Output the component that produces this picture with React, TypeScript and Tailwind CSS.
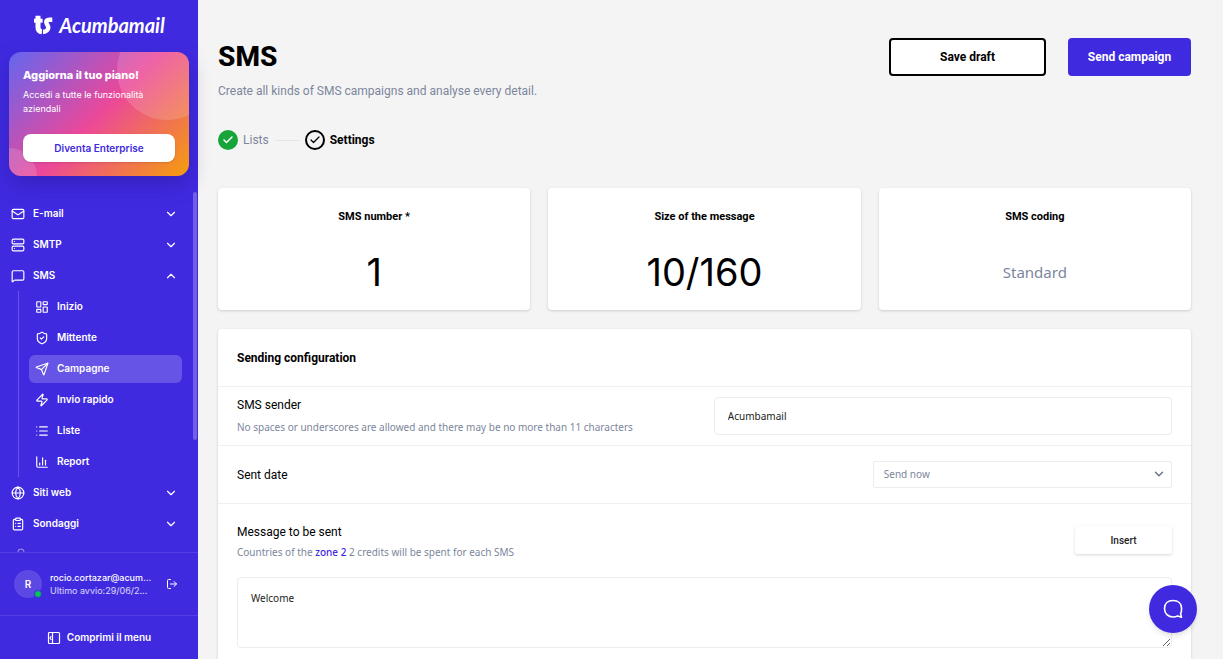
import React from 'react';
import {
    ChartColumn,
    Check,
    ChevronDown,
    ChevronUp,
    ClipboardList,
    Globe,
    LayoutDashboard,
    List,
    Lock,
    LogOut,
    LucideIcon,
    Mail,
    MessageSquare,
    Send,
    Server,
    ShieldCheck,
    Zap,
} from 'lucide-react';

interface NavEntry {
    label: string;
    icon: LucideIcon;
    active?: boolean;
}

const topItems: NavEntry[] = [
    { label: 'E-mail', icon: Mail },
    { label: 'SMTP', icon: Server },
];

const smsItems: NavEntry[] = [
    { label: 'Inizio', icon: LayoutDashboard },
    { label: 'Mittente', icon: ShieldCheck },
    { label: 'Campagne', icon: Send, active: true },
    { label: 'Invio rapido', icon: Zap },
    { label: 'Liste', icon: List },
    { label: 'Report', icon: ChartColumn },
];

const bottomItems: NavEntry[] = [
    { label: 'Siti web', icon: Globe },
    { label: 'Sondaggi', icon: ClipboardList },
];

const Logo: React.FC = () => (
    <a href="#" className="flex h-[50px] items-center justify-center gap-1.5 text-white">
        <svg width="20" height="20" viewBox="0 0 20 20" fill="none" stroke="currentColor" aria-hidden="true">
            <path d="M5 .8v11.400c0 2.800 1.200 4.300 3.900 4.500" strokeWidth="5" />
            <path d="M1 5.700h8.600" strokeWidth="4" />
            <path d="M19.300 4.800h-3c-2.500 0-3.600 1.200-2.900 3l1.500 3.400c1.100 2.700-.8 5.500-4.900 5.800" strokeWidth="4.400" />
        </svg>
        <span className="font-[Lato,sans-serif] text-xl leading-6 font-bold italic">Acumbamail</span>
    </a>
);

const UpgradeCard: React.FC = () => (
    <section className="relative mx-[9px] mt-0.5 overflow-hidden rounded-xl bg-[linear-gradient(135deg,#6366f1_0%,#ec4899_50%,#f59e0b_100%)] p-3.5 text-white shadow-[0_8px_20px_rgba(30,20,120,0.35)]">
        <div className="absolute -top-8 -right-7 size-[100px] rounded-full bg-white/15" />
        <div className="absolute -bottom-7 -left-7 size-[56px] rounded-full bg-white/15" />
        <div className="relative">
            <h2 className="text-[11px] leading-[18px] font-extrabold">Aggiorna il tuo piano!</h2>
            <p className="mt-1 text-[9px] leading-3.5">Accedi a tutte le funzionalità aziendali</p>
            <button className="mt-[18px] h-7 w-full rounded-lg bg-white text-[10px] font-semibold text-[#402ae0] shadow">
                Diventa Enterprise
            </button>
        </div>
    </section>
);

const NavGroup: React.FC<{ entry: NavEntry; open?: boolean }> = ({ entry, open }) => {
    const Icon = entry.icon;
    const Chevron = open ? ChevronUp : ChevronDown;
    return (
        <button className="flex h-[31px] w-full items-center gap-2 pr-5 pl-[11px] text-left text-[10px] font-semibold">
            <Icon size={14} strokeWidth={2} />
            <span className="flex-1">{entry.label}</span>
            <Chevron size={14} strokeWidth={2} />
        </button>
    );
};

const Sidebar: React.FC = () => (
    <aside className="flex w-[198px] shrink-0 flex-col bg-[#402ae0] font-[Inter,sans-serif] text-white">
        <Logo />
        <UpgradeCard />
        <div className="relative mt-4 min-h-0 flex-1 overflow-hidden">
            <nav className="pt-1.5">
                {topItems.map((item) => (
                    <NavGroup key={item.label} entry={item} />
                ))}
                <NavGroup entry={{ label: 'SMS', icon: MessageSquare }} open />
                <ul className="ml-[18px] border-l border-white/20 pr-4 pl-2.5">
                    {smsItems.map(({ label, icon: Icon, active }) => (
                        <li key={label} className="flex h-[31px] items-center">
                            <a
                                href="#"
                                className={`flex h-7 w-full items-center gap-2 rounded-md px-1.5 text-[10px] font-semibold ${active ? 'bg-white/20' : ''}`}
                            >
                                <Icon size={14} strokeWidth={2} />
                                {label}
                            </a>
                        </li>
                    ))}
                </ul>
                {bottomItems.map((item) => (
                    <NavGroup key={item.label} entry={item} />
                ))}
                <button aria-label="Altro" className="flex h-[31px] w-full items-center px-3.5 opacity-40">
                    <Lock size={14} />
                </button>
            </nav>
            {/* Scrollbar thumb */}
            <div className="absolute top-0 right-px h-[248px] w-1 rounded-full bg-white/25" />
        </div>
        <div className="flex h-[63px] items-center border-t border-white/10 pr-5 pl-3.5">
            <div className="relative flex size-7 shrink-0 items-center justify-center rounded-full bg-white/15 text-[10px] font-semibold">
                R
                <span className="absolute right-0 bottom-0 size-2 rounded-full border border-[#402ae0] bg-green-500" />
            </div>
            <div className="ml-2 min-w-0 flex-1 text-[9px] leading-[13px]">
                <div className="font-medium">rocio.cortazar@acum...</div>
                <div className="text-white/80">Ultimo avvio:29/06/2...</div>
            </div>
            <button aria-label="Esci">
                <LogOut size={12} />
            </button>
        </div>
        <button className="flex h-11 items-center justify-center gap-1.5 border-t border-white/10 text-[10px] font-semibold">
            <svg width="14" height="14" viewBox="0 0 14 14" fill="none" stroke="currentColor" strokeWidth="1.2" strokeLinecap="round" strokeLinejoin="round" aria-hidden="true">
                <rect x="1.500" y="1.500" width="11" height="11" rx="1" />
                <path d="M5.500 1.500v11M4 5.500 2.900 7 4 8.500" />
            </svg>
            Comprimi il menu
        </button>
    </aside>
);

const Steps: React.FC = () => (
    <ol className="mt-[29px] flex h-5 items-center text-xs">
        <li className="flex items-center gap-[5px] text-[#7c869c]">
            <span className="flex size-5 items-center justify-center rounded-full bg-[#17a53a] text-white">
                <Check size={12} strokeWidth={3} />
            </span>
            Lists
        </li>
        <li className="mx-1.5 h-px w-6 bg-[#e6e6e9]" aria-hidden="true" />
        <li className="flex items-center gap-[5px] font-bold">
            <span className="flex size-5 items-center justify-center rounded-full border-2 border-black">
                <Check size={12} strokeWidth={2.5} />
            </span>
            Settings
        </li>
    </ol>
);

const StatCard: React.FC<{ title: string; children: React.ReactNode }> = ({ title, children }) => (
    <div className="flex h-[122px] flex-col items-center rounded bg-white pt-[19px] shadow-[0_1px_3px_rgba(0,0,0,0.16)]">
        <h2 className="text-[11px] leading-5 font-bold">{title}</h2>
        <div className="mt-[21px] flex h-12 items-center">{children}</div>
    </div>
);

const SendingConfiguration: React.FC = () => (
    <section className="mt-[19px] rounded bg-white pb-10 shadow-[0_1px_3px_rgba(0,0,0,0.16)]">
        <h2 className="flex h-[57px] items-center px-[19px] text-xs font-bold">Sending configuration</h2>
        <div className="flex h-[59px] items-center justify-between border-t border-[#f0f0f2] px-[19px]">
            <div>
                <label htmlFor="sender" className="block text-xs leading-5">SMS sender</label>
                <p className="mt-0.5 font-['Noto_Sans',sans-serif] text-[10px] leading-5 text-[#7c869c]">
                    No spaces or underscores are allowed and there may be no more than 11 characters
                </p>
            </div>
            <input
                id="sender"
                defaultValue="Acumbamail"
                className="h-[38px] w-[49%] rounded border border-[#ececef] px-[13px] font-['Noto_Sans',sans-serif] text-[10px] text-[#222] outline-none"
            />
        </div>
        <div className="flex h-[58px] items-center justify-between border-t border-[#f0f0f2] px-[19px]">
            <label htmlFor="date" className="text-xs">Sent date</label>
            <div className="relative w-[32%]">
                <select
                    id="date"
                    className="block h-[27px] w-full appearance-none rounded-xs border border-[#ececef] bg-white px-2.5 font-['Noto_Sans',sans-serif] text-[10px] text-[#7c869c] outline-none"
                >
                    <option>Send now</option>
                </select>
                <ChevronDown size={14} strokeWidth={2.5} className="pointer-events-none absolute top-1.5 right-1.5 text-[#6b7688]" />
            </div>
        </div>
        <div className="border-t border-[#f0f0f2] px-[19px] pt-[18px]">
            <div className="flex items-center justify-between">
                <div>
                    <label htmlFor="message" className="block text-xs leading-5">Message to be sent</label>
                    <p className="font-['Noto_Sans',sans-serif] text-[10px] leading-5 text-[#7c869c]">
                        Countries of the <a href="#" className="font-medium text-[#402ae0]">zone 2</a> 2 credits will be spent for each SMS
                    </p>
                </div>
                <button className="mb-1 h-7 w-[97px] rounded-xs text-[10px] font-medium text-[#222] shadow-[0_1px_3px_rgba(0,0,0,0.16)]">
                    Insert
                </button>
            </div>
            <textarea
                id="message"
                defaultValue="Welcome"
                className="mt-[15px] block h-[71px] w-full rounded border border-[#ececef] px-[13px] py-2.5 font-['Noto_Sans',sans-serif] text-[10px] leading-5 text-[#222] outline-none"
            />
        </div>
    </section>
);

export default function App() {
    return (
        <div className="flex h-screen overflow-hidden bg-[#f4f4f4] text-black">
            <Sidebar />
            <main className="min-w-0 flex-1 overflow-hidden pt-[38px] pr-8 pl-5 font-[Roboto,sans-serif]">
                <header className="flex items-start justify-between">
                    <div>
                        <h1 className="text-[28px] leading-[38px] font-extrabold">SMS</h1>
                        <p className="mt-[5px] text-xs leading-5 text-[#7c869c]">
                            Create all kinds of SMS campaigns and analyse every detail.
                        </p>
                    </div>
                    <div className="flex gap-[22px] text-xs font-bold">
                        <button className="h-[38px] w-[157px] rounded border-2 border-black bg-white">Save draft</button>
                        <button className="h-[38px] w-[123px] rounded bg-[#402ae0] text-white">Send campaign</button>
                    </div>
                </header>
                <Steps />
                <div className="mt-[38px] grid grid-cols-3 gap-[18px]">
                    <StatCard title="SMS number *">
                        <span className="font-[Inter,sans-serif] text-[38px]">1</span>
                    </StatCard>
                    <StatCard title="Size of the message">
                        <span className="font-[Inter,sans-serif] text-[38px]">10/160</span>
                    </StatCard>
                    <StatCard title="SMS coding">
                        <span className="font-['Noto_Sans',sans-serif] text-[15px] text-[#7c869c]">Standard</span>
                    </StatCard>
                </div>
                <SendingConfiguration />
            </main>
            <button
                aria-label="Chat"
                className="fixed right-[26px] bottom-[26px] flex size-12 items-center justify-center rounded-full bg-[#402ae0] text-white shadow-md"
            >
                <svg width="22" height="22" viewBox="0 0 22 22" fill="none" stroke="currentColor" strokeWidth="1.6" strokeLinejoin="round" aria-hidden="true">
                    <path d="M11 2.500c-5 0-8.500 3-8.500 8s3.500 8.500 8.500 8.500c2 0 3.500-.4 4.700-1.100l3.800 1.300-.9-3.300c.6-1.200 1-3 1-5.400 0-5-3.600-8-8.600-8z" />
                </svg>
            </button>
        </div>
    );
}
